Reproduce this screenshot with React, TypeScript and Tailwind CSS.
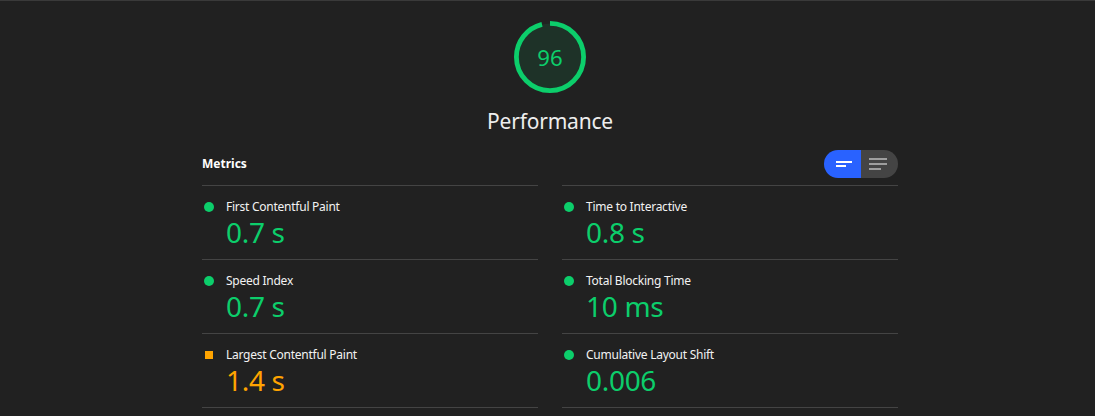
import React from "react";

type Metric = { title: string; value: string; status: "pass" | "average" };

const left: Metric[] = [
  { title: "First Contentful Paint", value: "0.7\u00a0s", status: "pass" },
  { title: "Speed Index", value: "0.7\u00a0s", status: "pass" },
  { title: "Largest Contentful Paint", value: "1.4\u00a0s", status: "average" },
];
const right: Metric[] = [
  { title: "Time to Interactive", value: "0.8\u00a0s", status: "pass" },
  { title: "Total Blocking Time", value: "10\u00a0ms", status: "pass" },
  { title: "Cumulative Layout Shift", value: "0.006", status: "pass" },
];

function Gauge() {
  const c = 2 * Math.PI * 56;
  return (
    <svg width="72" height="72" viewBox="0 0 120 120" className="block">
      <circle cx="60" cy="60" r="56" fill="rgba(12,206,107,0.1)" />
      <circle
        cx="60"
        cy="60"
        r="56"
        fill="none"
        stroke="#0cce6b"
        strokeWidth="8"
        strokeDasharray={`${0.96 * c} ${c}`}
        transform="rotate(-90 60 60)"
      />
      <text
        x="60"
        y="60"
        textAnchor="middle"
        dominantBaseline="central"
        fill="#0cce6b"
        fontSize="37"
        fontFamily="'Noto Sans', sans-serif"
      >
        96
      </text>
    </svg>
  );
}

function Row({ m }: { m: Metric }) {
  const pass = m.status === "pass";
  return (
    <div className="h-[73px] border-b border-[#444444] box-content">
      <div className="flex items-center pt-[12px] pl-[2px] h-[30px] box-border">
        {pass ? (
          <span className="w-[10px] h-[10px] rounded-full bg-[#0cce6b] shrink-0" />
        ) : (
          <span className="w-[10px] h-[10px] flex items-center justify-center shrink-0">
            <span className="w-[8px] h-[8px] bg-[#ffa400]" />
          </span>
        )}
        <span className="ml-[12px] text-[12px] leading-[18px] tracking-[-0.25px] text-[#f2f2f2]">{m.title}</span>
      </div>
      <div
        className={`pl-[24px] text-[28px] leading-[32px] tracking-[-0.3px] ${pass ? "text-[#0cce6b]" : "text-[#ffa400]"}`}
      >
        {m.value}
      </div>
    </div>
  );
}

export default function App() {
  return (
    <div
      className="w-full h-[416px] overflow-hidden bg-[#212121] border-t border-[#3a3a3a]"
      style={{ fontFamily: "'Noto Sans', sans-serif" }}
    >
      <div className="ml-[202px] w-[696px] flex flex-col">
        <div className="flex flex-col items-center pt-[20px]">
          <Gauge />
          <div className="mt-[13px] text-[21px] leading-[30px] tracking-[-0.2px] text-[#eeeeee]">Performance</div>
        </div>
        <div className="mt-[14px] mb-[7px] h-[28px] flex items-center justify-between">
          <span className="text-[12px] font-bold text-white">Metrics</span>
          <div className="flex h-[28px] rounded-full overflow-hidden">
            <div className="w-[37px] bg-[#2962ff] flex flex-col justify-center items-start pl-[12px] gap-[2px]">
              <span className="block w-[16px] h-[2px] bg-white" />
              <span className="block w-[10px] h-[2px] bg-white" />
            </div>
            <div className="w-[37px] bg-[#444444] flex flex-col justify-center items-start pl-[8px] gap-[3px]">
              <span className="block w-[18px] h-[2px] bg-[#9e9e9e]" />
              <span className="block w-[18px] h-[2px] bg-[#9e9e9e]" />
              <span className="block w-[12px] h-[2px] bg-[#9e9e9e]" />
            </div>
          </div>
        </div>
        <div className="grid grid-cols-2 gap-x-[24px]">
          <div className="border-t border-[#444444]">
            {left.map((m) => (
              <Row key={m.title} m={m} />
            ))}
          </div>
          <div className="border-t border-[#444444]">
            {right.map((m) => (
              <Row key={m.title} m={m} />
            ))}
          </div>
        </div>
      </div>
    </div>
  );
}
